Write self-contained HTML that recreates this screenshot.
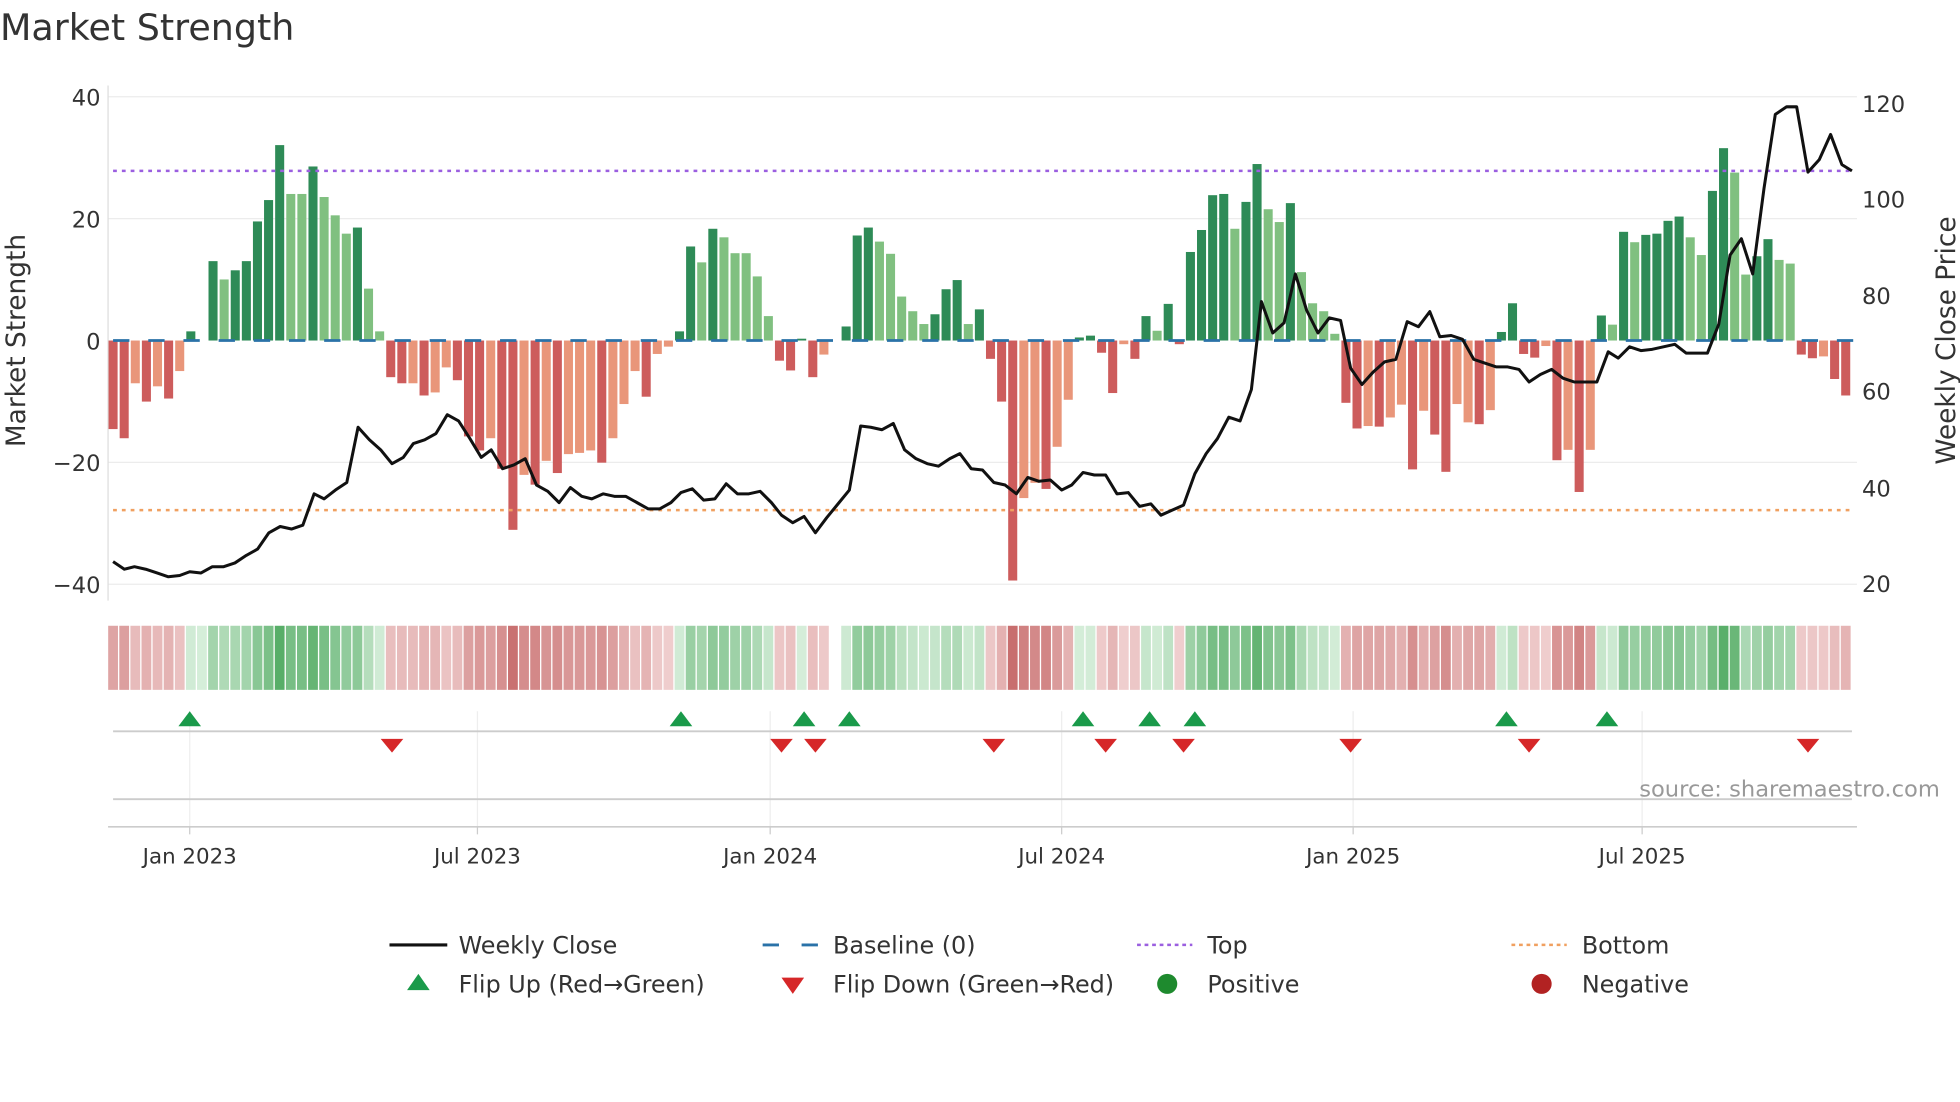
<!DOCTYPE html>
<html><head><meta charset="utf-8"><style>
html,body{margin:0;padding:0;background:#fff;}
svg{display:block;font-family:"DejaVu Sans","Liberation Sans",sans-serif;}
</style></head><body>
<svg id="c" width="1960" height="1102" viewBox="0 0 1560 877" preserveAspectRatio="none" xmlns="http://www.w3.org/2000/svg">
<text x="0" y="32" font-size="29" fill="#333">Market Strength</text>
<g stroke="#ececec" stroke-width="1">
<line x1="86" y1="77" x2="1478" y2="77"/><line x1="86" y1="174" x2="1478" y2="174"/><line x1="86" y1="368" x2="1478" y2="368"/><line x1="86" y1="465" x2="1478" y2="465"/>
</g>
<line x1="86" y1="68" x2="86" y2="478" stroke="#ddd"/>
<g font-size="18" fill="#333" text-anchor="end">
<text x="80" y="84">40</text><text x="80" y="181">20</text><text x="80" y="278">0</text><text x="80" y="375">−20</text><text x="80" y="472">−40</text>
</g>
<g font-size="18" fill="#333">
<text x="1482" y="89">120</text><text x="1482" y="165">100</text><text x="1482" y="242">80</text><text x="1482" y="318">60</text><text x="1482" y="395">40</text><text x="1482" y="471">20</text>
</g>
<text transform="translate(20,271) rotate(-90)" text-anchor="middle" font-size="21" fill="#333">Market Strength</text>
<text transform="translate(1556,271) rotate(-90)" text-anchor="middle" font-size="21" fill="#333">Weekly Close Price</text>
<g id="bars"></g>
<line x1="90" y1="271" x2="1476" y2="271" stroke="#2a72a8" stroke-width="2.2" stroke-dasharray="13,15"/>
<line x1="90" y1="136" x2="1476" y2="136" stroke="#9b5fe0" stroke-width="2" stroke-dasharray="3,4"/>
<line x1="90" y1="406" x2="1476" y2="406" stroke="#f0a060" stroke-width="2" stroke-dasharray="3,4"/>
<polyline id="price" fill="none" stroke="#111" stroke-width="2.4" stroke-linejoin="round"/>
<g id="strip"></g>
<g stroke="#eee"><line x1="151" y1="566" x2="151" y2="658"/><line x1="380" y1="566" x2="380" y2="658"/><line x1="613" y1="566" x2="613" y2="658"/><line x1="845" y1="566" x2="845" y2="658"/><line x1="1077" y1="566" x2="1077" y2="658"/><line x1="1307" y1="566" x2="1307" y2="658"/></g>
<line x1="90" y1="582" x2="1474" y2="582" stroke="#ccc" stroke-width="1.5"/>
<line x1="90" y1="636" x2="1474" y2="636" stroke="#ccc" stroke-width="1.5"/>
<g id="marks"></g>
<line x1="86" y1="658" x2="1478" y2="658" stroke="#ccc" stroke-width="1.2"/>
<g stroke="#ccc"><line x1="151" y1="658" x2="151" y2="664"/><line x1="380" y1="658" x2="380" y2="664"/><line x1="613" y1="658" x2="613" y2="664"/><line x1="845" y1="658" x2="845" y2="664"/><line x1="1077" y1="658" x2="1077" y2="664"/><line x1="1307" y1="658" x2="1307" y2="664"/></g>
<g font-size="17" fill="#333" text-anchor="middle">
<text x="151" y="687">Jan 2023</text><text x="380" y="687">Jul 2023</text><text x="613" y="687">Jan 2024</text><text x="845" y="687">Jul 2024</text><text x="1077" y="687">Jan 2025</text><text x="1307" y="687">Jul 2025</text>
</g>
<text x="1544" y="634" font-size="18" fill="#999" text-anchor="end">source: sharemaestro.com</text>
<g font-size="19" fill="#333">
<line x1="310" y1="752" x2="356" y2="752" stroke="#111" stroke-width="2.5"/><text x="365" y="759">Weekly Close</text>
<line x1="607" y1="752" x2="651" y2="752" stroke="#2a72a8" stroke-width="2.2" stroke-dasharray="13,18"/><text x="663" y="759">Baseline (0)</text>
<line x1="905" y1="752" x2="949" y2="752" stroke="#9b5fe0" stroke-width="2" stroke-dasharray="3,3"/><text x="961" y="759">Top</text>
<line x1="1203" y1="752" x2="1247" y2="752" stroke="#f0a060" stroke-width="2" stroke-dasharray="3,3"/><text x="1259" y="759">Bottom</text>
<path d="M324 788 L333 775 L342 788 Z" fill="#1a9a4a"/><text x="365" y="790">Flip Up (Red→Green)</text>
<path d="M622 778 L640 778 L631 791 Z" fill="#d62728"/><text x="663" y="790">Flip Down (Green→Red)</text>
<circle cx="929" cy="783" r="8" fill="#1e8a2e"/><text x="961" y="790">Positive</text>
<circle cx="1227" cy="783" r="8" fill="#b22222"/><text x="1259" y="790">Negative</text>
</g>
</svg>
<script>
var V=[[-14.5,1],[-16,1],[-7,0],[-10,1],[-7.5,0],[-9.5,1],[-5,0],[1.5,1],[0.2,1],[13,1],[10,0],[11.5,1],[13,1],[19.5,1],[23,1],[32,1],[24,0],[24,0],[28.5,1],[23.5,0],[20.5,0],[17.5,0],[18.5,1],[8.5,0],[1.5,0],[-6,1],[-7,1],[-7,0],[-9,1],[-8.5,0],[-4.4,0],[-6.5,1],[-15.7,1],[-18,1],[-16,0],[-21,1],[-31,1],[-22,0],[-23.6,1],[-19.7,0],[-21.7,1],[-18.6,0],[-18.4,0],[-18,0],[-20,1],[-16,0],[-10.4,0],[-5,0],[-9.2,1],[-2.2,0],[-1,0],[1.5,1],[15.4,1],[12.8,0],[18.3,1],[16.9,0],[14.3,0],[14.3,0],[10.5,0],[4,0],[-3.3,1],[-4.9,1],[0.3,1],[-6,1],[-2.3,0],[0,1],[2.3,1],[17.2,1],[18.5,1],[16.2,0],[14.2,0],[7.2,0],[4.8,0],[2.7,0],[4.3,1],[8.4,1],[9.9,1],[2.7,0],[5.1,1],[-3,1],[-10,1],[-39.3,1],[-25.8,0],[-23.3,0],[-24.3,1],[-17.4,0],[-9.7,0],[0.5,1],[0.8,1],[-2,1],[-8.6,1],[-0.6,0],[-3,1],[4,1],[1.6,0],[6,1],[-0.6,1],[14.5,1],[18.1,1],[23.8,1],[24,1],[18.3,0],[22.7,1],[28.9,1],[21.5,0],[19.4,0],[22.5,1],[11.2,0],[6.1,0],[4.8,0],[1.1,0],[-10.2,1],[-14.4,1],[-14,0],[-14.1,1],[-12.6,0],[-10.5,0],[-21.1,1],[-11.5,0],[-15.4,1],[-21.5,1],[-10.4,0],[-13.4,0],[-13.7,1],[-11.4,0],[1.4,1],[6.1,1],[-2.2,1],[-2.8,1],[-0.9,0],[-19.6,1],[-17.9,0],[-24.8,1],[-17.9,0],[4.1,1],[2.6,0],[17.8,1],[16.1,0],[17.3,1],[17.5,1],[19.6,1],[20.3,1],[16.9,0],[14,0],[24.5,1],[31.5,1],[27.5,0],[10.8,0],[13.8,1],[16.6,1],[13.2,0],[12.6,0],[-2.3,1],[-2.9,1],[-2.6,0],[-6.3,1],[-9,1]];
var NS="http://www.w3.org/2000/svg";
function el(t,a,p){var e=document.createElementNS(NS,t);for(var k in a)e.setAttribute(k,a[k]);p.appendChild(e);return e;}
var B=document.getElementById('bars'),S=document.getElementById('strip'),M=document.getElementById('marks');
function mix(a,b,t){var r=[];for(var i=0;i<3;i++)r.push(Math.round(a[i]+(b[i]-a[i])*t));return 'rgb('+r.join(',')+')';}
V.forEach(function(d,i){var v=d[0],x=90+i*8.84,h=Math.abs(v)*4.86;
 var col=v>=0?(d[1]?'#2e8b57':'#80c080'):(d[1]?'#cd5c5c':'#e9967a');
 if(h>0.3&&Math.abs(v)>0.25)el('rect',{x:x-3.6,y:v>=0?271-h:271,width:7.2,height:h,fill:col},B);
 if(v!==0){var t=Math.min(Math.abs(v)/32,1);
  var c=v>0?mix([214,238,218],[88,174,104],t):mix([240,208,208],[200,110,110],t);
  el('rect',{x:x-3.9,y:498,width:7.8,height:51,fill:c},S);}
});
var P=[90,447,99,453,107,451,116,453,125,456,134,459,143,458,151,455,160,456,169,451,178,451,187,448,196,442,205,437,214,424,223,419,232,421,241,418,250,393,258,397,267,390,276,384,285,340,294,350,303,358,312,369,321,364,329,353,338,350,347,345,356,330,365,335,374,349,383,364,391,358,400,373,409,370,418,365,427,386,436,391,445,400,454,388,463,395,471,397,480,393,489,395,498,395,507,400,516,405,525,405,534,400,542,392,551,389,560,398,569,397,578,385,587,393,596,393,605,391,614,400,622,410,631,416,640,411,649,424,658,412,667,401,676,390,685,339,693,340,702,342,711,337,720,358,729,365,738,369,747,371,756,365,764,361,773,373,782,374,791,384,800,386,809,393,818,380,827,383,836,382,845,390,853,386,862,376,871,378,880,378,889,393,898,392,907,403,916,401,924,410,933,406,942,402,951,377,960,361,969,349,978,332,987,335,996,310,1004,240,1013,265,1022,257,1031,218,1040,247,1049,265,1058,253,1067,255,1075,293,1084,306,1093,296,1102,288,1111,286,1120,256,1129,260,1138,248,1146,268,1155,267,1164,270,1173,286,1182,289,1191,292,1200,292,1209,294,1217,304,1226,298,1235,294,1244,301,1253,304,1262,304,1271,304,1280,280,1288,285,1297,276,1306,279,1315,278,1324,276,1333,274,1342,281,1351,281,1359,281,1368,258,1377,203,1386,190,1395,218,1404,150,1413,91,1422,85,1430,85,1439,137,1448,127,1457,107,1466,131,1474,136];
var pts=[];for(var i=0;i<P.length;i+=2)pts.push(P[i]+','+P[i+1]);
document.getElementById('price').setAttribute('points',pts.join(' '));
[151,542,640,676,862,915,951,1199,1279].forEach(function(x){el('path',{d:'M'+(x-9)+' 578 L'+x+' 566 L'+(x+9)+' 578 Z',fill:'#1a9a4a'},M);});
[312,622,649,791,880,942,1075,1217,1439].forEach(function(x){el('path',{d:'M'+(x-9)+' 588 L'+(x+9)+' 588 L'+x+' 599 Z',fill:'#d62728'},M);});
</script>
</body></html>
